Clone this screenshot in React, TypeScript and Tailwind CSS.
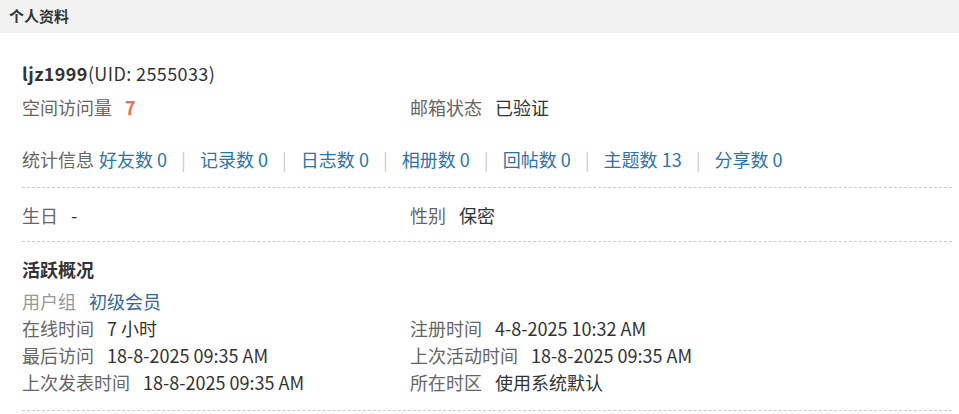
import React from "react";

const FONT = { fontFamily: "Tahoma, 'Noto Sans CJK SC', 'Noto Sans', sans-serif" };

function Field({ label, value, labelClass = "text-[#666]", valueClass = "text-[#333]" }: { label: string; value: React.ReactNode; labelClass?: string; valueClass?: string }) {
  return (
    <div className="leading-[27px] h-[27px] whitespace-nowrap">
      <span className={`${labelClass} mr-[13px]`}>{label}</span>
      <span className={valueClass}>{value}</span>
    </div>
  );
}

const stats: [string, string][] = [
  ["好友数", "0"],
  ["记录数", "0"],
  ["日志数", "0"],
  ["相册数", "0"],
  ["回帖数", "0"],
  ["主题数", "13"],
  ["分享数", "0"],
];

export default function App() {
  return (
    <div className="w-[959px] h-[414px] bg-white overflow-hidden text-[18px]" style={FONT}>
      <div className="h-[33px] bg-[#f2f2f2] pl-[9px] flex items-center text-[15px] font-bold text-[#333]">个人资料</div>
      <div className="pl-[22px] pr-[7px]">
        <div className="pt-[27px] pb-[14px] border-b border-dashed border-[#cdcdcd]">
          <div className="h-[27px] leading-[27px] text-[#333] tracking-[0.4px]">
            <span className="font-bold">ljz1999</span>(UID: 2555033)
          </div>
          <div className="mt-[7px] grid grid-cols-[388px_1fr]">
            <Field label="空间访问量" value="7" valueClass="text-[#f26c4f] font-bold" />
            <Field label="邮箱状态" value="已验证" />
          </div>
          <div className="mt-[25px] h-[27px] leading-[27px] flex items-center whitespace-nowrap">
            <span className="text-[#666] mr-[5px]">统计信息</span>
            {stats.map(([k, v], i) => (
              <React.Fragment key={k}>
                {i > 0 && <span className="text-[#ccc] mx-[14px]">|</span>}
                <span className="text-[#2b74ad]">{k} {v}</span>
              </React.Fragment>
            ))}
          </div>
        </div>
        <div className="pt-[14px] pb-[12px] border-b border-dashed border-[#cdcdcd] grid grid-cols-[388px_1fr]">
          <Field label="生日" value="-" />
          <Field label="性别" value="保密" />
        </div>
        <div className="pt-[14px] pb-[14px] border-b border-dashed border-[#cdcdcd]">
          <div className="h-[27px] leading-[27px] font-bold text-[#333]">活跃概况</div>
          <div className="mt-[5px]">
            <Field label="用户组" value="初级会员" labelClass="text-[#999]" valueClass="text-[#336699]" />
          </div>
          <div className="grid grid-cols-[388px_1fr]">
            <Field label="在线时间" value="7 小时" />
            <Field label="注册时间" value="4-8-2025 10:32 AM" />
            <Field label="最后访问" value="18-8-2025 09:35 AM" />
            <Field label="上次活动时间" value="18-8-2025 09:35 AM" />
            <Field label="上次发表时间" value="18-8-2025 09:35 AM" />
            <Field label="所在时区" value="使用系统默认" />
          </div>
        </div>
      </div>
    </div>
  );
}
